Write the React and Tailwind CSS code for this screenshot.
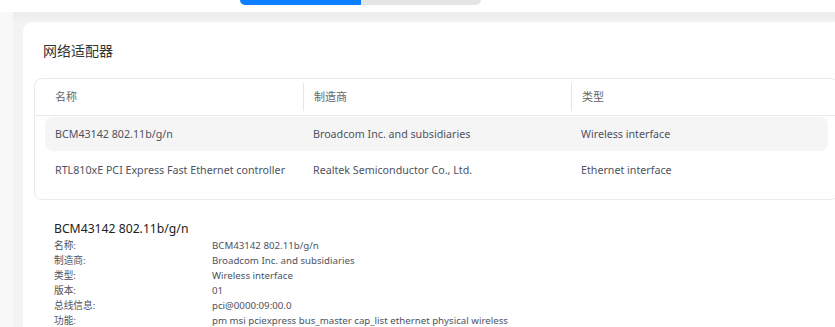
import React from "react";

const ADAPTERS = [
    {
        name: "BCM43142 802.11b/g/n",
        vendor: "Broadcom Inc. and subsidiaries",
        type: "Wireless interface",
    },
    {
        name: "RTL810xE PCI Express Fast Ethernet controller",
        vendor: "Realtek Semiconductor Co., Ltd.",
        type: "Ethernet interface",
    },
];

const DETAIL = [
    ["名称:", "BCM43142 802.11b/g/n"],
    ["制造商:", "Broadcom Inc. and subsidiaries"],
    ["类型:", "Wireless interface"],
    ["版本:", "01"],
    ["总线信息:", "pci@0000:09:00.0"],
    ["功能:", "pm msi pciexpress bus_master cap_list ethernet physical wireless"],
];

const FONT = { fontFamily: '"Noto Sans", "Noto Sans CJK SC", sans-serif' };

export default function App() {
    return (
        <div
            className="w-[835px] h-[327px] overflow-hidden bg-[#f1f1f1] flex flex-col"
            style={FONT}
        >
            {/* top bar with segmented tabs */}
            <div className="h-[12px] bg-white flex pl-[240px] shrink-0">
                <div className="w-[121px] h-[5px] bg-[#0a7eff] rounded-bl-[6px]" />
                <div className="w-[120px] h-[5px] bg-[#e5e5e5] rounded-br-[6px]" />
            </div>

            <div className="flex flex-1 min-h-0">
                <div className="w-[13px] bg-[#f8f8f8] shrink-0" />
                <div className="flex-1 pl-[10px] pt-[10px] bg-gradient-to-b from-[#ececec] to-[#f3f3f3] from-0% to-[12px]">
                    <div className="w-[840px] h-full bg-white rounded-tl-[10px] px-[11px] pt-[19px]">
                        <h2 className="pl-[9px] text-[14px] leading-[20px] text-[#333]">网络适配器</h2>

                        {/* table */}
                        <div className="mt-[17px] w-[805px] border border-[#ebebeb] rounded-[8px] pb-[12px]">
                            <div className="h-[37px] border-b border-[#ebebeb] px-[10px] grid grid-cols-[258px_268px_1fr] items-center text-[11px] text-[#666]">
                                <div className="pl-[10px]">名称</div>
                                <div className="pl-[10px] h-[28px] flex items-center border-l border-[#e6e6e6]">制造商</div>
                                <div className="pl-[10px] h-[28px] flex items-center border-l border-[#e6e6e6]">类型</div>
                            </div>
                            <div className="mx-[10px] mt-[1px] flex flex-col gap-[2px]">
                                {ADAPTERS.map((a, i) => (
                                    <div
                                        key={a.name}
                                        className={
                                            "h-[34px] grid grid-cols-[258px_268px_1fr] items-center text-[10.7px] text-[#4d5261] rounded-[8px] " +
                                            (i === 0 ? "bg-[#f5f5f5]" : "")
                                        }
                                    >
                                        <div className="pl-[10px] whitespace-nowrap">{a.name}</div>
                                        <div className="pl-[10px] whitespace-nowrap">{a.vendor}</div>
                                        <div className="pl-[10px] whitespace-nowrap">{a.type}</div>
                                    </div>
                                ))}
                            </div>
                        </div>

                        {/* detail */}
                        <div className="pl-[20px] pt-[20px]">
                            <div className="text-[12.2px] leading-[18px] text-[#222]">BCM43142 802.11b/g/n</div>
                            <div>
                                {DETAIL.map(([k, v]) => (
                                    <div key={k} className="flex text-[9.7px] leading-[15px] text-[#4d5261]">
                                        <div className="w-[158px] shrink-0">{k}</div>
                                        <div className="whitespace-nowrap">{v}</div>
                                    </div>
                                ))}
                            </div>
                        </div>
                    </div>
                </div>
            </div>
        </div>
    );
}
